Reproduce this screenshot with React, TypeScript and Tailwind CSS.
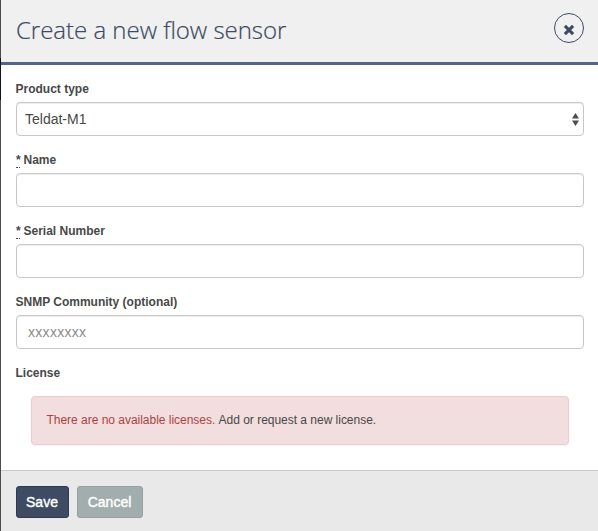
import type { ReactNode } from "react";

const inputClass =
  "block h-[34px] w-full rounded-[4px] border border-[#c8c8c8] bg-white pr-[12px] pl-[11px] text-[14px] text-[#555] shadow-[inset_0_1px_1px_rgba(0,0,0,0.075)] outline-none placeholder:tracking-[0.3px] placeholder:text-[#8c8c8c]";

function Field({ label, required, children }: { label: string; required?: boolean; children: ReactNode }) {
  return (
    <div className="h-[71px]">
      <label className="flex h-[21px] items-start text-[12px] leading-[16px] font-bold text-[#484848]">
        {required && (
          <abbr title="required" className="mr-[3.5px] h-[16px] w-[4px] border-b border-dotted border-[#484848] no-underline">
            *
          </abbr>
        )}
        <span className={required ? "" : "ml-[-0.5px]"}>{label}</span>
      </label>
      {children}
    </div>
  );
}

export default function App() {
  return (
    <div className="flex h-[531px] w-[598px] overflow-hidden bg-white font-['Liberation_Sans',Arial,sans-serif]">
      <div className="flex w-px shrink-0 flex-col bg-[#4b4b4d]">
        <div className="mt-[58px] h-[42px] bg-[#11141f]" />
      </div>
      <div className="flex min-w-0 flex-1 flex-col">
        <header className="flex h-[65px] shrink-0 items-start justify-between border-b-[3px] border-[#506788] bg-[#f0f0f0] pr-[14px] pl-[15px]">
          <h1 className="pt-[12px] font-['Open_Sans',sans-serif] text-[24px] leading-[36px] font-light tracking-[-0.02px] whitespace-nowrap text-[#3e4a61] [-webkit-text-stroke:0.2px_#3e4a61]">
            Create a new flow sensor
          </h1>
          <button aria-label="Close" className="mt-[13px] flex h-[30px] w-[30px] items-center justify-center rounded-full border border-[#3e4a61]">
            <svg width="12" height="12" viewBox="0 0 12 12" className="mt-[4px] ml-[-1px]">
              <path d="M1.9 1.9L10.1 10.1M10.1 1.9L1.9 10.1" stroke="#3e4a61" strokeWidth="3.1" />
            </svg>
          </button>
        </header>

        <main className="flex h-[405px] shrink-0 flex-col pt-[16px] pr-[14px] pl-[15px]">
          <Field label="Product type">
            <div className="flex h-[34px] items-center justify-between rounded-[4px] border border-[#c8c8c8] bg-white pr-[4px] pl-[8px] text-[14px] text-[#484848] shadow-[inset_0_1px_1px_rgba(0,0,0,0.075)]">
              <span>Teldat-M1</span>
              <svg width="7" height="13" viewBox="0 0 7 13">
                <path d="M0 5.5L3.5 0L7 5.5ZM0 7.5H7L3.5 13Z" fill="#4d4d4d" />
              </svg>
            </div>
          </Field>
          <Field label="Name" required>
            <input className={inputClass} />
          </Field>
          <Field label="Serial Number" required>
            <input className={inputClass} />
          </Field>
          <Field label="SNMP Community (optional)">
            <input className={inputClass} placeholder="xxxxxxxx" />
          </Field>
          <div className="ml-[-0.5px] text-[12px] leading-[16px] font-bold text-[#484848]">License</div>
          <div className="mx-[15px] mt-[15px] flex h-[49px] items-center rounded-[4px] border border-[#ebccd1] bg-[#f2dede] pr-[15px] pb-[2px] pl-[14.5px] text-[12px] tracking-[-0.02px] whitespace-pre text-[#a94442] shadow-[0_1px_2px_rgba(0,0,0,0.05)]">
            There are no available licenses. <span className="text-[#484848]">Add or request a new license.</span>
          </div>
        </main>

        <footer className="flex flex-1 items-start gap-[8px] border-t border-[#c8c8c8] bg-[#e9e9e9] pt-[15px] pl-[15px]">
          <button className="h-[32px] w-[53px] rounded-[3px] border border-[#2c3a52] bg-[#3e4b63] pr-[1px] text-[14px] text-white [-webkit-text-stroke:0.4px_white]">
            Save
          </button>
          <button className="h-[32px] w-[66px] rounded-[3px] border border-[#95a1a0] bg-[#a2adad] pr-[1px] text-[14px] text-white [-webkit-text-stroke:0.4px_white]">
            Cancel
          </button>
        </footer>
      </div>
    </div>
  );
}
